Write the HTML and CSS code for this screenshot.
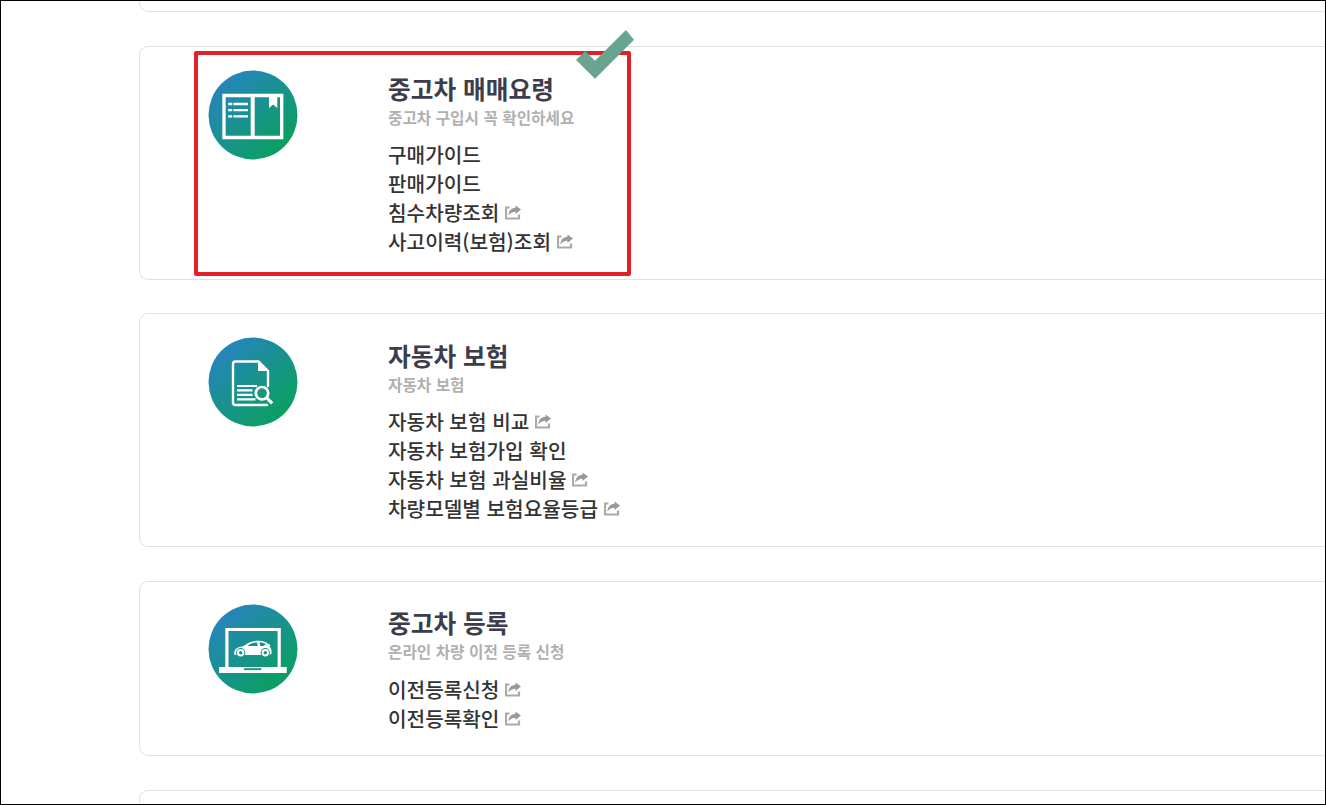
FILE: index.html
```html
<!DOCTYPE html>
<html lang="ko">
  <head>
    <meta charset="utf-8">
    <title>중고차 매매요령</title>
    <link rel="stylesheet" href="styles.css">
  </head>
  <body>
    <svg class="defs" width="0" height="0">
      <defs>
        <linearGradient id="grad" x1="0.15" y1="0.15" x2="0.8" y2="0.87">
          <stop offset="0" stop-color="#2585b9"/>
          <stop offset="1" stop-color="#0b9f62"/>
        </linearGradient>
        <symbol id="share" viewBox="0 0 16 15">
          <path d="M4.500 2.500H1v11h13V9.500" fill="none" stroke="#aaa" stroke-width="2.200"/>
          <path d="M10.500 .5l5.500 4-5.500 4.500V6.800C7.500 6.800 5.500 8 3.200 10.500 3.800 6 6.200 3 10.500 2.800z" fill="#999"/>
        </symbol>
      </defs>
    </svg>
    <div class="page">
      <div class="card card-top"></div>

      <div class="card">
        <svg class="icon" viewBox="0 0 90 90">
          <circle cx="45" cy="45" r="44.500" fill="url(#grad)"/>
          <path d="M16 25.500h57.700v42H16z" fill="none" stroke="#fff" stroke-width="3.300"/>
          <path d="M44.700 25v42" stroke="#fff" stroke-width="4"/>
          <path d="M61 26h8.300v12l-4.100-3.500-4.200 3.500z" fill="#fff"/>
          <path d="M20.200 34h4m1.200 0H40M20.200 40.200h4m1.200 0H40M20.200 46.400h4m1.200 0H40" stroke="#fff" stroke-width="2.300"/>
        </svg>
        <div class="info">
          <h2>중고차 매매요령</h2>
          <p>중고차 구입시 꼭 확인하세요</p>
          <ul>
            <li>구매가이드</li>
            <li>판매가이드</li>
            <li>침수차량조회<svg class="share"><use href="#share"/></svg></li>
            <li>사고이력(보험)조회<svg class="share"><use href="#share"/></svg></li>
          </ul>
        </div>
        <!-- highlight box and check mark over the card -->
        <div class="mark"></div>
        <svg class="check" viewBox="0 0 58 49">
          <path d="M0 30l9.300-9 9.700 9.700L50 0l8 9.700-39 39z" fill="#69a48f"/>
        </svg>
      </div>

      <div class="card">
        <svg class="icon" viewBox="0 0 90 90">
          <circle cx="45" cy="45" r="44.500" fill="url(#grad)"/>
          <path d="M60 49V34L50.500 24.500H27.500a2.500 2.500 0 0 0-2.500 2.500v38.500a2.500 2.500 0 0 0 2.500 2.500H59" fill="none" stroke="#fff" stroke-width="2.400" stroke-linecap="round"/>
          <path d="M50 23.500v10.500h11z" fill="#fff"/>
          <path d="M29 49h20M29 53.400h15.500M29 57.800h15.500M29 62.300h18.500" stroke="#fff" stroke-width="2.200"/>
          <circle cx="54" cy="56.200" r="6.200" fill="none" stroke="#fff" stroke-width="2.700"/>
          <path d="M58.500 60.700l5.700 5.700" stroke="#fff" stroke-width="3.200"/>
        </svg>
        <div class="info">
          <h2>자동차 보험</h2>
          <p>자동차 보험</p>
          <ul>
            <li>자동차 보험 비교<svg class="share"><use href="#share"/></svg></li>
            <li>자동차 보험가입 확인</li>
            <li>자동차 보험 과실비율<svg class="share"><use href="#share"/></svg></li>
            <li>차량모델별 보험요율등급<svg class="share"><use href="#share"/></svg></li>
          </ul>
        </div>
      </div>

      <div class="card card-small">
        <svg class="icon" viewBox="0 0 90 90">
          <circle cx="45" cy="45" r="44.500" fill="url(#grad)"/>
          <path d="M18.900 64V25.500h52.300V64" fill="none" stroke="#fff" stroke-width="3.200"/>
          <path d="M11 63h67.700v6H11z" fill="#fff"/>
          <path d="M36 64.200h17.300v1.900H36z" fill="#14967d"/>
          <path d="M26.200 50.500c-.5-5.500 3.500-7.500 9.500-8.500 4.300-3.600 8.800-5.200 15-5.200 4 0 7 1.200 9.500 3.200l2.200.8-.8 1.700c1.800 1.800 2.200 5 1.900 7.500l-2.500 1H28z" fill="#fff"/>
          <path d="M39.500 42c2.700-2.400 5.500-3.500 9.500-3.600l.8 3.600zM51.500 38.400c3 0 5 .6 6.500 1.800L55.300 42h-3.100z" fill="#18908b"/>
          <circle cx="32.700" cy="48.700" r="4.600" fill="#18908b"/>
          <circle cx="32.700" cy="48.700" r="2.700" fill="none" stroke="#fff" stroke-width="2"/>
          <circle cx="57.300" cy="48.700" r="4.600" fill="#159379"/>
          <circle cx="57.300" cy="48.700" r="2.700" fill="none" stroke="#fff" stroke-width="2"/>
        </svg>
        <div class="info">
          <h2>중고차 등록</h2>
          <p>온라인 차량 이전 등록 신청</p>
          <ul>
            <li>이전등록신청<svg class="share"><use href="#share"/></svg></li>
            <li>이전등록확인<svg class="share"><use href="#share"/></svg></li>
          </ul>
        </div>
      </div>

      <div class="card card-bottom"></div>
    </div>
  </body>
</html>
```
FILE: styles.css
```css
* {
  box-sizing: border-box;
}

body {
  margin: 0;
  font-family: "Noto Sans CJK KR", sans-serif;
  background-color: #fff;
}

.defs {
  display: block;
}

.page {
  height: 805px;
  border: 1px solid #000;
  padding-left: 138px;
  overflow: hidden;
}

.card {
  position: relative;
  display: flex;
  align-items: flex-start;
  gap: 90px;
  height: 234px;
  margin-bottom: 33px;
  padding: 23px 0 0 68px;
  border: 1px solid #e1e1e1;
  border-right: 0;
  border-radius: 9px 0 0 9px;
}

.card-top {
  height: 11px;
  margin-bottom: 34px;
  padding: 0;
  border-top: 0;
  border-radius: 0 0 0 9px;
}

.card-small {
  height: 175px;
  margin-top: 34px;
  margin-bottom: 34px;
  padding-top: 22px;
}

.card-small ul {
  padding-top: 1px;
}

.card-bottom {
  height: 40px;
}

.icon {
  width: 90px;
  height: 90px;
}

.info {
  white-space: nowrap;
}

h2 {
  margin: 0;
  font-size: 24.7px;
  font-weight: 700;
  line-height: 36px;
  color: #3c3c4b;
}

p {
  margin: 0 0 10px;
  font-size: 15.7px;
  font-weight: 700;
  line-height: 24px;
  color: #b0b0b0;
}

ul {
  margin: 0;
  padding: 0;
  list-style: none;
}

li {
  display: flex;
  align-items: center;
  gap: 6px;
  height: 29px;
  font-size: 20.2px;
  font-weight: 500;
  line-height: 29px;
  color: #333;
}

.share {
  width: 16px;
  height: 15px;
}

.mark {
  position: absolute;
  left: 54px;
  top: 4px;
  width: 437px;
  height: 225px;
  border: 4px solid #e02228;
  border-radius: 2px;
}

.check {
  position: absolute;
  left: 436px;
  top: -17px;
  width: 58px;
  height: 49px;
}
```
